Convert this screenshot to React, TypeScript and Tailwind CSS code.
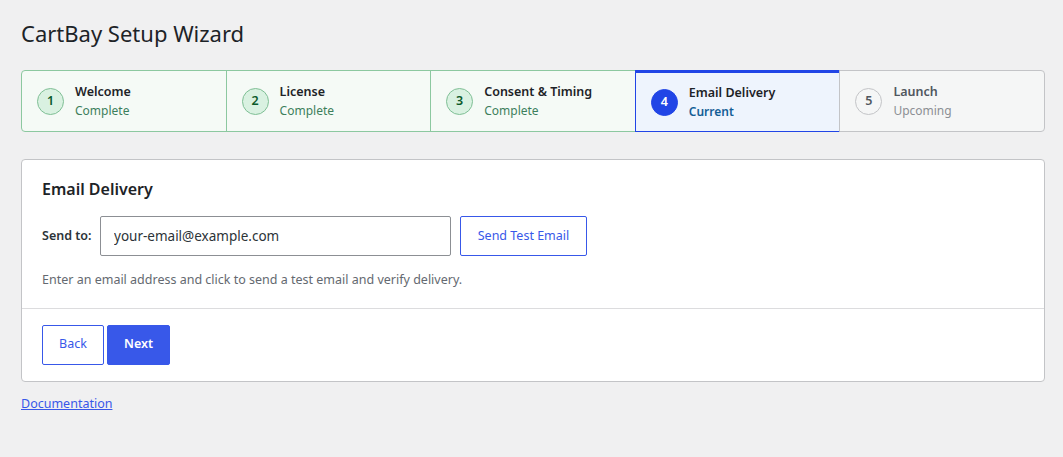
import { useState } from 'react'

type StepState = 'complete' | 'current' | 'upcoming'

interface Step {
  num: number
  title: string
  state: StepState
}

const steps: Step[] = [
  { num: 1, title: 'Welcome', state: 'complete' },
  { num: 2, title: 'License', state: 'complete' },
  { num: 3, title: 'Consent & Timing', state: 'complete' },
  { num: 4, title: 'Email Delivery', state: 'current' },
  { num: 5, title: 'Launch', state: 'upcoming' },
]

const labels: Record<StepState, string> = {
  complete: 'Complete',
  current: 'Current',
  upcoming: 'Upcoming',
}

function StepItem({ step, first, last }: { step: Step; first: boolean; last: boolean }) {
  const box =
    step.state === 'complete'
      ? 'bg-[#f5faf6] border-[#8cc8a0]'
      : step.state === 'current'
        ? 'bg-[#eef4fd] border-[#2145e6] border-t-[3px] pt-0'
        : 'bg-[#f5f6f6] border-[#c3c4c7]'

  const circle =
    step.state === 'complete'
      ? 'bg-[#d9f1e1] border-[#7fbf95] text-[#0b5a2a]'
      : step.state === 'current'
        ? 'bg-[#2145e6] border-[#2145e6] text-white'
        : 'bg-[#f5f6f6] border-[#c3c4c7] text-[#50575e]'

  const sub =
    step.state === 'complete'
      ? 'text-[#3d7f5c]'
      : step.state === 'current'
        ? 'text-[#135e96] font-semibold'
        : 'text-[#8c8f94]'

  return (
    <div
      className={`flex-1 flex items-center gap-[11px] pl-[15px] h-[62px] border ${box} ${
        first ? 'rounded-l' : ''
      } ${last ? 'rounded-r' : ''} ${first ? '' : '-ml-px'}`}
    >
      <div
        className={`w-[27px] h-[27px] rounded-full border flex items-center justify-center text-[12.5px] font-semibold ${circle}`}
      >
        {step.num}
      </div>
      <div className="flex flex-col leading-[19px]">
        <span
          className={`text-[12.5px] font-semibold ${
            step.state === 'upcoming' ? 'text-[#50575e]' : 'text-[#1d2327]'
          }`}
        >
          {step.title}
        </span>
        <span className={`text-[12px] ${sub}`}>{labels[step.state]}</span>
      </div>
    </div>
  )
}

export default function App() {
  const [email, setEmail] = useState('your-email@example.com')

  return (
    <div
      className="min-h-[457px] bg-[#f0f0f1] pl-[21px] pr-[18px] pt-[18px]"
      style={{ fontFamily: '"Noto Sans", "Open Sans", sans-serif' }}
    >
      <h1 className="text-[22px] leading-[30px] text-[#1d2327] font-normal">CartBay Setup Wizard</h1>

      <div className="flex mt-[22px]">
        {steps.map((s, i) => (
          <StepItem key={s.num} step={s} first={i === 0} last={i === steps.length - 1} />
        ))}
      </div>

      <div className="mt-[27px] bg-white border border-[#c3c4c7] rounded">
        <div className="px-5 pt-[17px] pb-[18px] border-b border-[#dcdcde]">
          <h2 className="text-[16px] font-semibold text-[#1d2327] leading-6">Email Delivery</h2>
          <div className="flex items-center mt-[15px]">
            <label className="text-[12.5px] font-semibold text-[#2c3338] w-[58px]">Send to:</label>
            <input
              value={email}
              onChange={(e) => setEmail(e.target.value)}
              className="w-[351px] h-10 border border-[#8c8f94] rounded-[2px] px-[13px] text-[13.5px] text-[#2c3338] outline-none"
            />
            <button className="ml-[9px] h-10 w-[127px] border border-[#3858e9] rounded-[2px] text-[12.5px] text-[#3858e9] bg-white">
              Send Test Email
            </button>
          </div>
          <p className="mt-[15px] text-[12.5px] text-[#646970]">
            Enter an email address and click to send a test email and verify delivery.
          </p>
        </div>
        <div className="px-5 pt-4 pb-4 flex gap-[3px]">
          <button className="w-[62px] h-10 border border-[#3858e9] rounded-[2px] text-[12.5px] text-[#3858e9] bg-white">
            Back
          </button>
          <button className="w-[63px] h-10 border border-[#3858e9] rounded-[2px] text-[12.5px] font-semibold text-white bg-[#3858e9]">
            Next
          </button>
        </div>
      </div>

      <a href="#" className="inline-block mt-[13px] text-[12.5px] text-[#3858e9] underline">
        Documentation
      </a>
    </div>
  )
}
